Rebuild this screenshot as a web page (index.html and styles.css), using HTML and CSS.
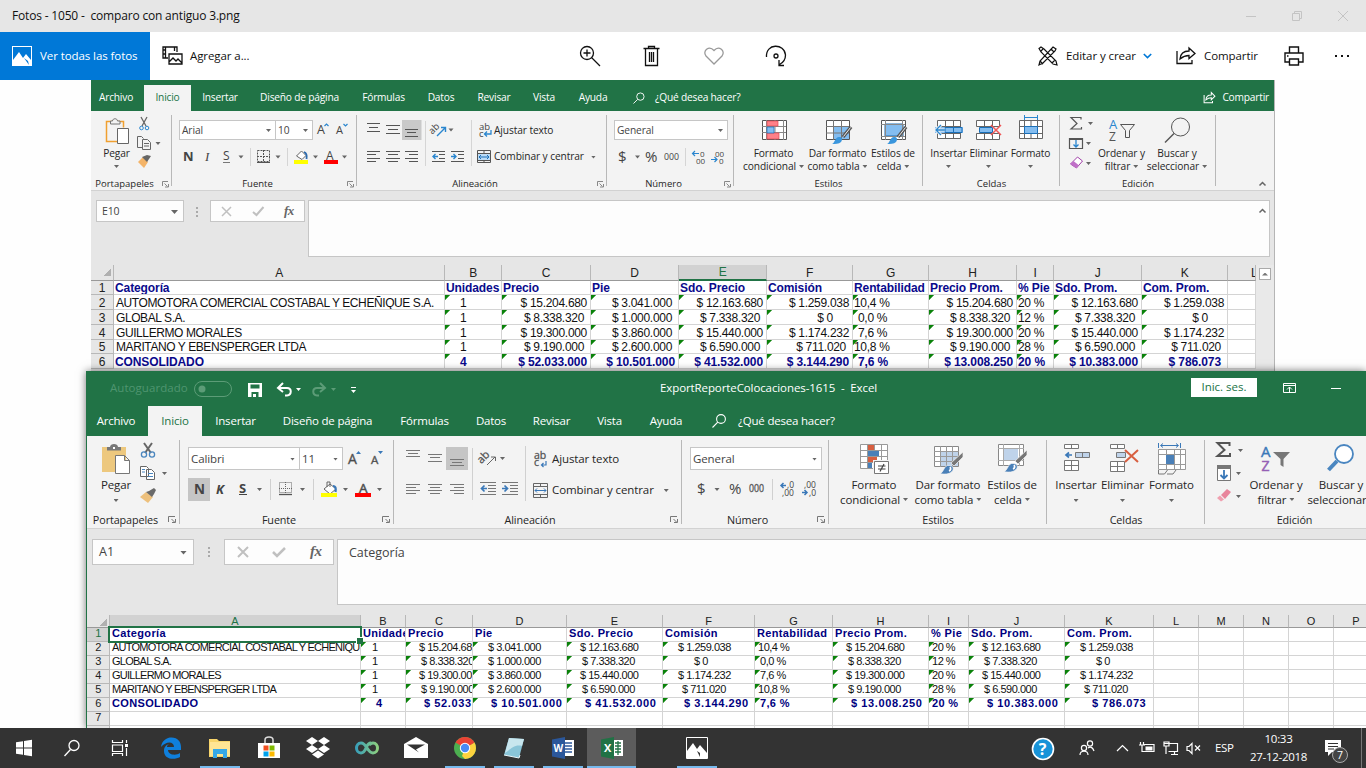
FILE: index.html
```html
<!DOCTYPE html>
<html lang="es">
<head>
<meta charset="utf-8">
<title>Fotos</title>
<link rel="stylesheet" href="styles.css">
</head>
<body>
<header class="titlebar">
  <span class="titlebar-text">Fotos - 1050 -&nbsp; comparo con antiguo 3.png</span>
  <svg class="win-controls" width="138" height="32" viewBox="1228 0 138 32" fill="none" stroke="#c4c4c4"><path d="M1246 16.500h10M1292.500 13.500h7v7h-7zM1294.500 13.500v-2h7v7h-2M1338 11l10 10M1348 11l-10 10"/></svg>
</header>
<nav class="photobar">
  <a class="all-photos">
    <svg width="20" height="20" viewBox="0 0 20 20"><path d="M0 0h20v20H0z" fill="#fff"/><path d="M1 1h18v13l-5-6-3 4-4-6-6 8z" fill="#0078d7"/><path d="M12 12l5 7-1-4z" fill="#0078d7"/></svg>
    <span>Ver todas las fotos</span>
  </a>
  <a class="add-to">
    <svg width="22" height="20" viewBox="0 0 22 20" fill="none" stroke="#111" stroke-width="1.300"><path d="M6 12H1V1h14v5M3.500 1v11M12.500 1v4M1 4h2M1 8h2M7 8h13v10H7zM7 16l4-4 3 3 2-2 4 4"/></svg>
    <span>Agregar a...</span>
  </a>
  <svg class="photo-tools" width="226" height="48" viewBox="570 32 226 48" fill="none" stroke="#111" stroke-width="1.300">
    <circle cx="587" cy="53" r="6.500"/><path d="M591.500 57.500l8.500 8.500M583.500 53h7M587 49.500v7"/>
    <path d="M643.500 48.500h16M648.500 48v-1.500h6V48M645.500 49v16.500h12V49M649.500 52v10M651.500 52v10M653.500 52v10"/>
    <path stroke="#999" d="M714 64l-8-8c-4-5 3-11 8-5.500 5-5.500 12 .5 8 5.500z"/>
    <path d="M766.500 57c-1-14 18-14 19-2 0 5-3 8-6 9.500M779 60v5.500h5"/><circle cx="776" cy="56" r="2"/>
  </svg>
  <div class="photo-actions">
    <svg width="20" height="20" viewBox="0 0 20 20" fill="none" stroke="#111" stroke-width="1.200"><path d="M1 2.500L3 1l3 2 12 12 1 4-4-1L3 6zM3 5l2-2M14 17l3-3M15 1l3 2-1 2L5 17l-4 2 1-4zM13 3l3 3M2 15l3 3"/></svg>
    <span class="act-edit">Editar y crear</span>
    <svg class="chev" width="9" height="6" viewBox="0 0 9 6" fill="none" stroke="#0078d7" stroke-width="1.600"><path d="M.8 1l3.700 3.600L8.200 1"/></svg>
    <svg width="20" height="20" viewBox="0 0 20 20" fill="none" stroke="#111" stroke-width="1.300"><path d="M1 5v12.500h15V14M4 13c.5-6 5-8 9-8V2l6 5.500-6 5V9.500c-4 0-6 1-9 3.500z"/></svg>
    <span class="act-share">Compartir</span>
    <svg class="print" width="20" height="20" viewBox="0 0 20 20" fill="none" stroke="#111" stroke-width="1.400"><path d="M5.500 7V1h9v6M5 16H1V7h18v9h-4M5.500 13h9v6h-9zM3 10h1.500"/></svg>
    <svg class="dots" width="16" height="4" viewBox="0 0 16 4" fill="#111"><path d="M1 1h2v2H1zM7 1h2v2H7zM13 1h2v2h-2z"/></svg>
  </div>
</nav>

<main class="stage">
<section class="photo">
  <div class="tabs old-tabs">
    <span>Archivo</span><span class="on">Inicio</span><span>Insertar</span><span>Diseño de página</span><span>Fórmulas</span><span>Datos</span><span>Revisar</span><span>Vista</span><span>Ayuda</span>
    <svg width="12" height="12" viewBox="0 0 13 13" fill="none" stroke="#fff"><circle cx="8" cy="5" r="4"/><path d="M5 8l-4.500 4.500"/></svg>
    <span class="ask">¿Qué desea hacer?</span>
    <span class="share"><svg width="13" height="12" viewBox="0 0 20 20" fill="none" stroke="#fff" stroke-width="1.700"><path d="M1 5v13h14v-3M4 13c.5-6 5-8 9-8V1l6 6-6 6V9.500c-4 0-6 1-9 3.500z"/></svg>Compartir</span>
  </div>
  <div class="ribbon old-ribbon">
    <div class="group g1">
      <div class="gbody">
        <div class="big"><svg width="24" height="36" viewBox="106 111 24 36" fill="none"><path d="M119 141.500h-11.500V121.500h17v6" stroke="#f0a030" stroke-width="1.500"/><path d="M111.500 124v-3h2c0-3 5-3 5 0h2.500v3z" fill="#f3f3f3" stroke="#777"/><path d="M118.500 128.500h11v15h-11z" fill="#fff" stroke="#666"/></svg><b>Pegar</b><i class="caret"></i></div>
        <svg width="34" height="66" viewBox="137 111 34 66" fill="none"><path d="M141 117l5 9M147 117l-5 9" stroke="#666" stroke-width="1.300"/><circle cx="141.500" cy="128" r="1.800" stroke="#2a86cf"/><circle cx="147" cy="128" r="1.800" stroke="#2a86cf"/><path d="M142 147.500h-4.500v-11h4l2 2M142.500 139.500h5l3 3v7h-8zM144 143.500h5M144 146h5" stroke="#666"/><path d="M155.500 142h5l-2.500 3z" fill="#666"/><path d="M138 162l5-5 5 5-4 6z" fill="#f4b468"/><path d="M142 157l5 5 4-6-4-1z" fill="#666"/></svg>
      </div>
      <div class="gfoot"><span>Portapapeles</span><svg width="14" height="8" viewBox="0 0 14 8" fill="none" stroke="#888"><path d="M4.500 6V1.500H10M6.500 3.500l3 3M10.500 4v3H7"/></svg></div>
    </div>
    <div class="group g2">
      <div class="gbody col">
        <div class="line"><span class="select s-font">Arial<i class="caret"></i></span><span class="select s-size">10<i class="caret"></i></span><svg width="40" height="20" viewBox="313 120 40 20"><text x="317" y="134" class="glyph" font-size="12.500">A</text><text x="336" y="134" class="glyph" font-size="11">A</text><path d="M324.500 126l2-2 2 2M343.500 124l2 2 2-2" fill="none" stroke="#2a86cf" stroke-width="1.200"/></svg></div>
        <svg width="178" height="28" viewBox="179 143 178 28"><text x="183" y="161" class="glyph" font-size="13" font-weight="700">N</text><text x="205" y="161" class="glyph serif" font-size="13" font-style="italic">I</text><text x="223" y="160" class="glyph" font-size="12">S</text><path d="M223 162.500h7" stroke="#777"/><path d="M250.500 148v18M287.500 148v18" stroke="#d5d5d5"/><path d="M257.500 150.500h12v11h-12zM263.500 150v12M257 156.500h13" fill="none" stroke="#555" stroke-dasharray="2 1"/><path d="M257 162.500h13" stroke="#555"/><path d="M296.500 156l5-5 4.500 4.500-4 4z" fill="#fff" stroke="#666"/><path d="M304 152c3 1 3 4 2.500 7" stroke="#2a6aaf" stroke-width="1.800" fill="none"/><path d="M294 160h14v4h-14z" fill="#ff0"/><text x="326" y="160" class="glyph" font-size="12">A</text><path d="M324 160h14v4h-14z" fill="red"/><path d="M238.500 155.500h5l-2.500 3zM275.500 155.500h5l-2.500 3zM313 155.500h5l-2.500 3zM342 155.500h5l-2.500 3z" fill="#666"/></svg>
      </div>
      <div class="gfoot"><span>Fuente</span><svg width="14" height="8" viewBox="0 0 14 8" fill="none" stroke="#888"><path d="M4.500 6V1.500H10M6.500 3.500l3 3M10.500 4v3H7"/></svg></div>
    </div>
    <div class="group g3">
      <div class="gbody">
        <svg width="117" height="66" viewBox="357 111 117 66" fill="none" stroke="#555"><path d="M402 120h19.500v20H402z" fill="#c9c9c9" stroke="none"/><path d="M367 123.500h13M369 127.500h9M367 131.500h13M386 125.500h14M388 129.500h10M386 133.500h14M405 129.500h13M407 132.500h9M405 136.500h13M367 151.500h13M367 154.500h9M367 158.500h13M367 161.500h9M386 151.500h14M388 154.500h10M386 158.500h14M388 161.500h10M405 151.500h13M409 154.500h9M405 158.500h13M409 161.500h9M432 151.500h13M439 154.500h6M439 158.500h6M432 161.500h13M451 151.500h13M458 154.500h6M458 158.500h6M451 161.500h13"/><path d="M425.500 121v45M471.500 120v46" stroke="#d5d5d5"/><path d="M438 156.500h-5M435.500 154l-2.500 2.500 2.500 2.500M451 156.500h5M453.500 154l2.500 2.500-2.500 2.500M437 136l8-8M441 127.500h4.500v4.500" stroke="#2a86cf" stroke-width="1.400"/><text x="431" y="132" class="glyph" font-size="9.500" transform="rotate(-45 435 132)" stroke="none">ab</text><path d="M448.500 128.500h5l-2.500 3z" fill="#666" stroke="none"/></svg>
        <div class="wraps"><div><svg width="20" height="18" viewBox="0 0 20 18"><text x="5" y="8" class="glyph" font-size="9.500">ab</text><text x="5" y="15" class="glyph" font-size="9.500">c</text><path d="M17 8v4h-6M13 9.500L10.500 12l2.500 2.500" fill="none" stroke="#2a86cf" stroke-width="1.300"/></svg>Ajustar texto</div>
        <div><svg width="20" height="16" viewBox="0 0 20 16" fill="none"><path d="M3.500 1.500h13v12h-13zM3 4.500h13M3 11.500h13M10 2v2M10 12v2" stroke="#555"/><path d="M4 5h12v6H4z" fill="#bcdcf7"/><path d="M5 8h10M7 6L5 8l2 2M13 6l2 2-2 2" stroke="#1a6fb8"/></svg>Combinar y centrar<i class="caret"></i></div></div>
      </div>
      <div class="gfoot"><span>Alineación</span><svg width="14" height="8" viewBox="0 0 14 8" fill="none" stroke="#888"><path d="M4.500 6V1.500H10M6.500 3.500l3 3M10.500 4v3H7"/></svg></div>
    </div>
    <div class="group g4">
      <div class="gbody col">
        <span class="select">General<i class="caret"></i></span>
        <svg width="119" height="28" viewBox="614 143 119 28"><text x="618" y="162" class="glyph" font-size="15">$</text><text x="645" y="162" class="glyph" font-size="15">%</text><text x="664" y="160" class="glyph" font-size="9.500" textLength="15" lengthAdjust="spacingAndGlyphs">000</text><text x="700" y="157" class="glyph" font-size="8">0</text><text x="696" y="164" class="glyph" font-size="8">00</text><text x="715" y="157" class="glyph" font-size="8">00</text><text x="719" y="164" class="glyph" font-size="8">0</text><path d="M699 153.500h-6M695 151l-2.500 2.500 2.500 2.500M711 159.500h6M714.500 157l2.500 2.500-2.500 2.500" fill="none" stroke="#2a86cf" stroke-width="1.200"/><path d="M635 155.500h5l-2.500 3z" fill="#666"/><path d="M685.500 148v18" stroke="#d5d5d5"/></svg>
      </div>
      <div class="gfoot"><span>Número</span><svg width="14" height="8" viewBox="0 0 14 8" fill="none" stroke="#888"><path d="M4.500 6V1.500H10M6.500 3.500l3 3M10.500 4v3H7"/></svg></div>
    </div>
    <div class="group g5">
      <div class="gbody">
        <div class="big w1"><svg width="26" height="36" viewBox="760 111 26 36" fill="none"><path d="M761.500 120.500h24v19h-24z" fill="#fff" stroke="#555"/><path d="M765.500 120v20M782.500 120v20M761 126.500h24M761 132.500h24M774 120v20" stroke="#888"/><path d="M766 121h11v5h-11zM766 133h12v6h-12z" fill="#ff8088" stroke="#e04850" stroke-width=".7"/><path d="M766 127h7v6h-7z" fill="#84bdf0" stroke="#1a6fb8" stroke-width=".7"/></svg><b>Formato</b><b>condicional<i class="caret"></i></b></div>
        <div class="big w2"><svg width="26" height="36" viewBox="824 111 26 36" fill="none"><path d="M825.500 120.500h23v19h-23z" fill="#fff" stroke="#555"/><path d="M833 126h15v13h-15z" fill="#84bdf0"/><path d="M825 126.500h23M825 133h23M832.500 120v20M840.500 120v20" stroke="#777"/><path d="M850 127l-8 10" stroke="#555" stroke-width="3.500"/><path d="M849.500 127.500l-7 9" stroke="#eee"/><path d="M831 144c3-1 3-7 7-7 3 0 4 2 2 5-2 2-6 2-9 2z" fill="#3a96dd"/></svg><b>Dar formato</b><b>como tabla<i class="caret"></i></b></div>
        <div class="big w3"><svg width="26" height="36" viewBox="879 111 26 36" fill="none"><path d="M880.500 120.500h24v19h-24z" fill="#fff" stroke="#555"/><path d="M884 124h18v12h-18z" fill="#84bdf0" stroke="#1a6fb8"/><path d="M884.500 120v20M880 124.500h24M880 136.500h24M901.500 120v20" stroke="#888"/><path d="M905 127l-8 10" stroke="#555" stroke-width="3.500"/><path d="M904.500 127.500l-7 9" stroke="#eee"/><path d="M886 144c3-1 3-7 7-7 3 0 4 2 2 5-2 2-6 2-9 2z" fill="#3a96dd"/></svg><b>Estilos de</b><b>celda<i class="caret"></i></b></div>
      </div>
      <div class="gfoot"><span>Estilos</span></div>
    </div>
    <div class="group g6">
      <div class="gbody">
        <div class="big w1"><svg width="28" height="36" viewBox="935 111 28 36" fill="none"><path d="M937.500 120.500h23v18h-23zM945.500 120v19M953.500 120v19M937 126.500h24M937 133.500h24" fill="#fff" stroke="#666"/><path d="M935 127h28v6h-28z" fill="#84bdf0"/><path d="M945 127.500h17v5h-17zM953.500 127v6" stroke="#1a6fb8"/><path d="M945 130h-9M941 125l-5 5 5 5" stroke="#f3f3f3" stroke-width="3"/><path d="M945 130h-9M941 125l-5 5 5 5" stroke="#2a86cf" stroke-width="1.300"/></svg><b>Insertar</b><i class="caret"></i></div>
        <div class="big w2"><svg width="28" height="36" viewBox="976 111 28 36" fill="none"><path d="M977.500 120.500h23v6h-23zM977.500 133.500h23v6h-23zM985.500 120v6M993.500 120v6M985.500 133v6M993.500 133v6" fill="#fff" stroke="#666"/><path d="M980.500 127.500h13v5h-13z" fill="#84bdf0" stroke="#1a6fb8"/><path d="M992 125l10 10M1002 125l-10 10" stroke="#f05858" stroke-width="1.500"/></svg><b>Eliminar</b><i class="caret"></i></div>
        <div class="big w3"><svg width="26" height="36" viewBox="1018 111 26 36" fill="none"><path d="M1019.500 120.500h23v18h-23zM1024.500 120v19M1037.500 120v19M1019 126.500h24M1019 133.500h24M1031 120v19" fill="#fff" stroke="#666"/><path d="M1024.500 126.500h13v7h-13z" fill="#84bdf0" stroke="#1a6fb8"/><path d="M1024 117.500h14M1024.500 115v5M1037.500 115v5" stroke="#2a86cf"/></svg><b>Formato</b><i class="caret"></i></div>
      </div>
      <div class="gfoot"><span>Celdas</span></div>
    </div>
    <div class="group g7">
      <div class="gbody">
        <svg width="37" height="66" viewBox="1060 111 37 66" fill="none"><path d="M1081 119.500v-2h-10l6 6-6 5.500h10.500v-2M1069.500 138.500h13v10h-13zM1069 139.500h14" stroke="#555" stroke-width="1.200"/><path d="M1076 140v7M1073.500 144.500l2.500 2.500 2.500-2.500" stroke="#2a86cf" stroke-width="1.300"/><path d="M1070.500 164l7-7 5 4-6 7z" fill="#fff" stroke="#a040a8"/><path d="M1070.500 164l3-3 5 4-2.500 3z" fill="#c070c8"/><path d="M1088 122h5l-2.500 3zM1086 142h5l-2.500 3zM1086 162h5l-2.500 3z" fill="#666"/></svg>
        <div class="big w1"><svg width="28" height="36" viewBox="1107 111 28 36" fill="none"><text x="1108" y="129" font-size="13" fill="#2a86cf" class="ui">A</text><text x="1108" y="141" font-size="12" fill="#555" class="ui">Z</text><path d="M1119.500 124.500h14l-5 6v7h-4v-7z" stroke="#555"/></svg><b>Ordenar y</b><b>filtrar<i class="caret"></i></b></div>
        <div class="big w2"><svg width="28" height="36" viewBox="1163 111 28 36" fill="none" stroke="#555"><circle cx="1180.500" cy="127" r="9"/><path d="M1174 133.500l-9 9" stroke-width="1.400"/></svg><b>Buscar y</b><b>seleccionar<i class="caret"></i></b></div>
      </div>
      <div class="gfoot"><span>Edición</span></div>
    </div>
    <svg class="collapse" width="9" height="6" viewBox="0 0 9 6" fill="none" stroke="#666" stroke-width="1.500"><path d="M1.500 4.500l3-3 3 3"/></svg>
  </div>
  <div class="fbar old-fbar">
    <span class="namebox">E10<i class="caret"></i></span>
    <svg width="26" height="22" viewBox="184 200 26 22" fill="#aaa"><path d="M196 207h2v2h-2zM196 211h2v2h-2zM196 215h2v2h-2z"/></svg>
    <span class="fx"><svg width="93" height="20" viewBox="211 201 93 20" fill="none" stroke="#c0c0c0" stroke-width="1.500"><path d="M222 207l9 9M231 207l-9 9"/><path d="M253 212l3.500 3 7-8" stroke-width="2"/><text x="284" y="215" class="glyph fxg" font-size="13" stroke="none">fx</text></svg></span>
    <span class="finput"><svg width="9" height="6" viewBox="0 0 9 6" fill="none" stroke="#666" stroke-width="1.500"><path d="M1.500 4.500l3-3 3 3"/></svg></span>
  </div>
  <div class="sheet">
  <table class="old-table">
    <colgroup><col class="c0"><col class="c1"><col class="c2"><col class="c3"><col class="c4"><col class="c5"><col class="c6"><col class="c7"><col class="c8"><col class="c9"><col class="c10"><col class="c11"><col class="c12"></colgroup>
    <tr class="head"><th class="corner"></th><th>A</th><th>B</th><th>C</th><th>D</th><th class="sel">E</th><th>F</th><th>G</th><th>H</th><th>I</th><th>J</th><th>K</th><th class="cut">L</th></tr>
    <tr class="bold"><th>1</th><td>Categoría</td><td>Unidades</td><td>Precio</td><td>Pie</td><td>Sdo. Precio</td><td>Comisión</td><td>Rentabilidad</td><td>Precio Prom.</td><td>% Pie</td><td>Sdo. Prom.</td><td>Com. Prom.</td><td></td></tr>
    <tr><th>2</th><td class="name">AUTOMOTORA COMERCIAL COSTABAL Y ECHEÑIQUE S.A.</td><td class="t u">1</td><td class="t n">$ 15.204.680</td><td class="t n m">$ 3.041.000</td><td class="t n">$ 12.163.680</td><td class="t n">$ 1.259.038</td><td class="t">10,4 %</td><td class="t n">$ 15.204.680</td><td class="t">20 %</td><td class="t n">$ 12.163.680</td><td class="t n">$ 1.259.038</td><td></td></tr>
    <tr><th>3</th><td class="name">GLOBAL S.A.</td><td class="t u">1</td><td class="t n m">$ 8.338.320</td><td class="t n m">$ 1.000.000</td><td class="t n m">$ 7.338.320</td><td class="t n z">$ 0</td><td class="t p">0,0 %</td><td class="t n m">$ 8.338.320</td><td class="t">12 %</td><td class="t n m">$ 7.338.320</td><td class="t n z">$ 0</td><td></td></tr>
    <tr><th>4</th><td class="name">GUILLERMO MORALES</td><td class="t u">1</td><td class="t n">$ 19.300.000</td><td class="t n m">$ 3.860.000</td><td class="t n">$ 15.440.000</td><td class="t n">$ 1.174.232</td><td class="t p">7,6 %</td><td class="t n">$ 19.300.000</td><td class="t">20 %</td><td class="t n">$ 15.440.000</td><td class="t n">$ 1.174.232</td><td></td></tr>
    <tr><th>5</th><td class="name">MARITANO Y EBENSPERGER LTDA</td><td class="t u">1</td><td class="t n m">$ 9.190.000</td><td class="t n m">$ 2.600.000</td><td class="t n m">$ 6.590.000</td><td class="t n m">$ 711.020</td><td class="t">10,8 %</td><td class="t n m">$ 9.190.000</td><td class="t">28 %</td><td class="t n m">$ 6.590.000</td><td class="t n m">$ 711.020</td><td></td></tr>
    <tr class="bold"><th>6</th><td>CONSOLIDADO</td><td class="t u">4</td><td class="t n">$ 52.033.000</td><td class="t n">$ 10.501.000</td><td class="t n">$ 41.532.000</td><td class="t n">$ 3.144.290</td><td class="t p">7,6 %</td><td class="t n">$ 13.008.250</td><td class="t">20 %</td><td class="t n">$ 10.383.000</td><td class="t n m">$ 786.073</td><td></td></tr>
  </table>
  <div class="vscroll"><span><i></i></span></div>
  </div>
</section>

<section class="excel">
  <div class="xtitle">
    <span class="autosave">Autoguardado</span>
    <svg width="170" height="34" viewBox="190 371 170 34" fill="none"><rect x="194.500" y="380.500" width="37" height="15" rx="7.500" stroke="#5c9c77"/><circle cx="202" cy="388" r="3.500" fill="#5c9c77"/><path d="M248 382h14v14h-14z" fill="#fff"/><path d="M250.500 383.500h9v4h-9zM251.500 391h7v5h-7z" fill="#217346"/><path d="M253 393h3v3h-3z" fill="#fff"/><path d="M283 382l-5 5 5 4M279 387h8c5 0 5 7 0 7.500h-2" stroke="#fff" stroke-width="2"/><path d="M320 382l5 5-5 4M324 387h-7c-5 0-5 7 0 7.500h2" stroke="#5c9c77" stroke-width="2"/><path d="M296 387h5l-2.500 3zM351 389h5l-2.500 3z" fill="#fff"/><path d="M331 387h5l-2.500 3z" fill="#5c9c77"/><path d="M351 386.500h5" stroke="#fff"/></svg>
    <span class="xname">ExportReporteColocaciones-1615 &nbsp;-&nbsp; Excel</span>
    <span class="signin">Inic. ses.</span>
    <svg width="100" height="34" viewBox="1266 371 100 34" fill="none" stroke="#fff"><path d="M1283.500 382.500h12v9h-12zM1283 384.500h13M1289.500 391v-5M1287 388.500l2.500-2.500 2.500 2.500M1331 387.500h10"/></svg>
  </div>
  <div class="tabs new-tabs">
    <span>Archivo</span><span class="on">Inicio</span><span>Insertar</span><span>Diseño de página</span><span>Fórmulas</span><span>Datos</span><span>Revisar</span><span>Vista</span><span>Ayuda</span>
    <svg width="14" height="14" viewBox="0 0 14 14" fill="none" stroke="#fff" stroke-width="1.100"><circle cx="9" cy="5" r="4.400"/><path d="M5.800 8.200L.5 13.500"/></svg>
    <span class="ask">¿Qué desea hacer?</span>
  </div>
  <div class="ribbon new-ribbon">
    <div class="group g1">
      <div class="gbody">
        <div class="big"><svg width="30" height="40" viewBox="103 436 30 40" fill="none"><path d="M104 447h24v25h-24z" fill="#edc87e"/><path d="M109 450.500v-3.500h3c0-4 8-4 8 0h3v3.500z" fill="#777"/><path d="M115 447h2v2h-2z" fill="#fff"/><path d="M117.500 455.500h9l5 5v13h-14zM126.500 455.500v5h5" fill="#fff" stroke="#777"/></svg><b>Pegar</b><i class="caret"></i></div>
        <svg width="40" height="75" viewBox="139 436 40 75" fill="none"><path d="M144 443l7 10M152 443l-7 10" stroke="#666" stroke-width="2"/><circle cx="144" cy="454.500" r="2.600" stroke="#4a86bf" stroke-width="1.300"/><circle cx="152" cy="454.500" r="2.600" stroke="#4a86bf" stroke-width="1.300"/><path d="M140.500 466.500h6l2 2v8h-8zM146.500 469.500h5l3 3v7h-8z" fill="#fff" stroke="#666"/><path d="M142 469.500h3M142 472h3M148 473.500h5M148 476.500h5" stroke="#4a86bf"/><path d="M162 472h5l-2.500 3z" fill="#666"/><path d="M140 497l6-5 7 5-5 6z" fill="#edc07c"/><path d="M146 492l6 5 2-3 2-4-2-2-5 3z" fill="#6a6a6a"/></svg>
      </div>
      <div class="gfoot"><span>Portapapeles</span><svg width="16" height="9" viewBox="0 0 16 9" fill="none" stroke="#777"><path d="M4.500 7V1.500H11M7.500 4l3 3M11.500 4v3.500H8"/></svg></div>
    </div>
    <div class="group g2">
      <div class="gbody col">
        <div class="line"><span class="select s-font">Calibri<i class="caret"></i></span><span class="select s-size">11<i class="caret"></i></span><svg width="48" height="23" viewBox="343 447 48 23"><text x="348" y="464" class="glyph" font-size="14" stroke="#666" stroke-width=".4">A</text><text x="371" y="464" class="glyph" font-size="11.500" stroke="#666" stroke-width=".4">A</text><path d="M356 454l2.500-3 2.500 3zM378 451l2.500 3 2.500-3z" fill="#3a78b8"/></svg></div>
        <svg width="205" height="34" viewBox="188 473 205 34"><path d="M188 478h22v23h-22z" fill="#c5c5c5"/><text x="194" y="494" class="glyph" font-size="13.500" font-weight="700">N</text><text x="216" y="494" class="glyph" font-size="13" font-weight="700" font-style="italic">K</text><text x="239" y="493" class="glyph" font-size="13" font-weight="700">S</text><path d="M239 494.500h8" stroke="#444"/><path d="M270.500 479v21M313.500 479v21" stroke="#d0d0d0"/><path d="M279.500 482.500h12v10h-12zM285.500 482v11M279 488.500h13" fill="none" stroke="#666" stroke-dasharray="1 1"/><path d="M279 494.500h13" stroke="#555" stroke-width="1.300"/><path d="M324 489l6-5 6 5-6 5z" fill="#fff" stroke="#666"/><path d="M327 487v-5h3v5" fill="none" stroke="#666"/><path d="M333 486c3 0 3 3 2.500 6" stroke="#3a78b8" stroke-width="2.200" fill="none"/><path d="M321 493h16v4h-16z" fill="#ff0"/><text x="359" y="493" class="glyph" font-size="13.500" stroke="#555" stroke-width=".5">A</text><path d="M355 493h16v4h-16z" fill="red"/><path d="M257 488h5l-2.500 3zM300 488h5l-2.500 3zM343 488h5l-2.500 3zM377 488h5l-2.500 3z" fill="#666"/></svg>
      </div>
      <div class="gfoot"><span>Fuente</span><svg width="16" height="9" viewBox="0 0 16 9" fill="none" stroke="#777"><path d="M4.500 7V1.500H11M7.500 4l3 3M11.500 4v3.500H8"/></svg></div>
    </div>
    <div class="group g3">
      <div class="gbody">
        <svg width="134" height="75" viewBox="394 436 134 75" fill="none" stroke="#777"><path d="M446 447h22v23h-22z" fill="#c5c5c5" stroke="none"/><path d="M406 450.500h14M408 453.500h10M406 456.500h14M428 454.500h14M430 457.500h10M428 461.500h14M450 459.500h14M452 462.500h10M450 465.500h14M406 484.500h14M406 487.500h10M406 490.500h14M406 493.500h10M428 484.500h14M430 487.500h10M428 490.500h14M430 493.500h10M450 484.500h14M454 487.500h10M450 490.500h14M454 493.500h10M480 482.500h16M488 485.500h8M488 488.500h8M488 491.500h8M480 494.500h16M502 482.500h16M510 485.500h8M510 488.500h8M510 491.500h8M502 494.500h16"/><path d="M472.500 448v52M525.500 446v55" stroke="#d0d0d0"/><path d="M487 488.500h-5M484.500 485.500l-3 3 3 3M502 488.500h5M504.500 485.500l3 3-3 3" stroke="#3a78b8" stroke-width="1.700"/><path d="M487 465l8-8M491 457h4.500v4" stroke="#666"/><text x="479" y="461" class="glyph" font-size="11" transform="rotate(-45 484 460)" stroke="#666" stroke-width=".3">ab</text><path d="M500 457h5l-2.500 3z" fill="#666" stroke="none"/></svg>
        <div class="wraps"><div><svg width="24" height="20" viewBox="0 0 24 20"><text x="6" y="9" class="glyph" font-size="10.500" stroke="#666" stroke-width=".3">ab</text><text x="6" y="16" class="glyph" font-size="10.500" stroke="#666" stroke-width=".3">c</text><path d="M18 11v4h-4M15.500 13L13.500 15l2 2" fill="none" stroke="#3a78b8" stroke-width="1.200"/></svg>Ajustar texto</div>
        <div><svg width="24" height="17" viewBox="0 0 24 17" fill="none"><path d="M5.500 1.500h14v14h-14zM5 4.500h14M5 12.500h14M12.500 2v2M12.500 13v2" stroke="#666"/><path d="M7 8.500h11M9 6.500l-2 2 2 2M16 6.500l2 2-2 2" stroke="#3a78b8"/></svg>Combinar y centrar<i class="caret"></i></div></div>
      </div>
      <div class="gfoot"><span>Alineación</span><svg width="16" height="9" viewBox="0 0 16 9" fill="none" stroke="#777"><path d="M4.500 7V1.500H11M7.500 4l3 3M11.500 4v3.500H8"/></svg></div>
    </div>
    <div class="group g4">
      <div class="gbody col">
        <span class="select">General<i class="caret"></i></span>
        <svg width="138" height="34" viewBox="690 473 138 34"><text x="697" y="494" class="glyph" font-size="15">$</text><text x="729" y="494" class="glyph" font-size="15">%</text><text x="749" y="492" class="glyph" font-size="10" stroke="#666" stroke-width=".3" textLength="15" lengthAdjust="spacingAndGlyphs">000</text><text x="787" y="488" class="glyph" font-size="8.500">,0</text><text x="782" y="496" class="glyph" font-size="8.500">,00</text><text x="804" y="488" class="glyph" font-size="8.500">,00</text><text x="809" y="496" class="glyph" font-size="8.500">,0</text><path d="M786 485.500h-5M783.500 483l-2.500 2.500 2.500 2.500M802 492.500h5M804.500 490l2.500 2.500-2.500 2.500" fill="none" stroke="#3a78b8" stroke-width="1.500"/><path d="M714.500 488h5l-2.500 3z" fill="#666"/><path d="M772.500 479v21" stroke="#d0d0d0"/></svg>
      </div>
      <div class="gfoot"><span>Número</span><svg width="16" height="9" viewBox="0 0 16 9" fill="none" stroke="#777"><path d="M4.500 7V1.500H11M7.500 4l3 3M11.500 4v3.500H8"/></svg></div>
    </div>
    <div class="group g5">
      <div class="gbody">
        <div class="big w1"><svg width="32" height="40" viewBox="858 436 32 40" fill="none"><path d="M860.500 444.500h27v24h-27zM867.500 444v25M881.500 444v25M860 450.500h27M860 456.500h27M860 462.500h27M874.500 444v25" fill="#fff" stroke="#999"/><path d="M868 445h6v5h-6zM868 457h9v5h-9z" fill="#d85f40"/><path d="M868 451h11v5h-11zM868 463h4v5h-4z" fill="#4a80b8"/><path d="M873 460h17v15h-17z" fill="#f3f3f3"/><path d="M874.500 461.500h14v12h-14z" fill="#fff" stroke="#777"/><path d="M878 466h7.500M878 469h7.500M884 464l-4 7.500" stroke="#444" stroke-width="1.200"/></svg><b>Formato</b><b>condicional<i class="caret"></i></b></div>
        <div class="big w2"><svg width="32" height="40" viewBox="933 436 32 40" fill="none"><path d="M935.500 446.500h24v20h-24z" fill="#fff" stroke="#888"/><path d="M942 452h17v14h-17z" fill="#bfd3ea"/><path d="M935 451.500h25M935 456.500h25M935 461.500h25M941.500 446v21M947.500 446v21M953.500 446v21" stroke="#999"/><path d="M964 452v5l-9 9-3-3z" fill="#777" stroke="#f3f3f3" stroke-width=".7"/><path d="M941 473.500c4-1 4-9 9-8 5 0 5 4 3 6-3 3-8 3-12 2z" fill="#4a80b8" stroke="#f3f3f3" stroke-width=".7"/><path d="M950 471a2.500 2.500 0 0 0 1-4" stroke="#fff" stroke-width="1.800"/></svg><b>Dar formato</b><b>como tabla<i class="caret"></i></b></div>
        <div class="big w3"><svg width="32" height="40" viewBox="997 436 32 40" fill="none"><path d="M999.500 444.500h25v21h-25z" fill="#fff" stroke="#888"/><path d="M1004.500 444v22M1020.500 444v22M999 448.500h26M999 460.500h26" stroke="#aaa"/><path d="M1005 449h14v11h-14z" fill="#bfd3ea"/><path d="M1028 450v5l-9 9-3-3z" fill="#777" stroke="#f3f3f3" stroke-width=".7"/><path d="M1005 471.500c4-1 4-9 9-8 5 0 5 4 3 6-3 3-8 3-12 2z" fill="#4a80b8" stroke="#f3f3f3" stroke-width=".7"/><path d="M1014 469a2.500 2.500 0 0 0 1-4" stroke="#fff" stroke-width="1.800"/></svg><b>Estilos de</b><b>celda<i class="caret"></i></b></div>
      </div>
      <div class="gfoot"><span>Estilos</span></div>
    </div>
    <div class="group g6">
      <div class="gbody">
        <div class="big w1"><svg width="28" height="40" viewBox="1062 436 28 40" fill="none"><path d="M1064.500 444.500h14v4h-14zM1071.500 444v5M1064.500 460.500h14v10h-14zM1071.500 460v11M1064 465.500h15" fill="#fff" stroke="#777"/><path d="M1075.500 452.500h14v5h-14zM1082.500 452v6" fill="#bfd3ea" stroke="#777"/><path d="M1072 455h-6M1069 452.500l-3 2.500 3 2.500" stroke="#3a78b8" stroke-width="1.700"/></svg><b>Insertar</b><i class="caret"></i></div>
        <div class="big w2"><svg width="30" height="40" viewBox="1107 436 30 40" fill="none"><path d="M1109.500 444.500h14v4h-14zM1116.500 444v5M1109.500 461.500h14v10h-14zM1116.500 461v11M1109 466.500h15" fill="#fff" stroke="#777"/><path d="M1115.500 452.500h9v5h-9z" fill="#bfd3ea" stroke="#777"/><path d="M1124 450l13 12M1137 450l-13 12" stroke="#d85f40" stroke-width="2"/></svg><b>Eliminar</b><i class="caret"></i></div>
        <div class="big w3"><svg width="30" height="40" viewBox="1157 436 30 40" fill="none"><path d="M1158.500 449.500h27v20h-27zM1166.500 449v20M1174.500 449v20M1180.500 449v20M1158 454.500h27M1158 464.500h27" fill="#fff" stroke="#999"/><path d="M1158.500 470v4h6l3-4M1167 474h6l3-4" stroke="#777"/><path d="M1166 455h8v9h-8z" fill="#4a80b8"/><path d="M1158.500 443v5M1180.500 443v5M1161 445.500h17M1163 443.500l-2.500 2 2.500 2M1176 443.500l2.500 2-2.500 2" stroke="#3a78b8"/></svg><b>Formato</b><i class="caret"></i></div>
      </div>
      <div class="gfoot"><span>Celdas</span></div>
    </div>
    <div class="group g7">
      <div class="gbody">
        <svg width="44" height="75" viewBox="1205 436 44 75" fill="none"><path d="M1229.500 446v-3h-12l7 7-7 6h12.500v-3" stroke="#555" stroke-width="2"/><path d="M1217.500 466.500h13v14h-13z" fill="#fff" stroke="#777"/><path d="M1217 465h14v4h-14z" fill="#777"/><path d="M1224 470v8M1220.500 475l3.500 3.500 3.500-3.500" stroke="#3a78b8" stroke-width="1.800"/><path d="M1221 495l6-6 4 3-6 7z" fill="#e8859c"/><path d="M1217 498l3-2.500 4 4-3 2z" fill="#f0a0b0"/><path d="M1238 449h5l-2.500 3zM1236 472h5l-2.500 3zM1236 495h5l-2.500 3z" fill="#666"/></svg>
        <div class="big w1"><svg width="30" height="40" viewBox="1261 436 30 40"><text x="1261" y="457" font-size="15" fill="#3a78b8" stroke="#3a78b8" stroke-width=".4" class="ui">A</text><text x="1261.500" y="471" font-size="14" fill="#955fb5" stroke="#955fb5" stroke-width=".5" class="ui">Z</text><path d="M1273 452h17l-6.500 7v8l-3-2v-6z" fill="#777"/></svg><b>Ordenar y</b><b>filtrar<i class="caret"></i></b></div>
        <div class="big w2"><svg width="30" height="40" viewBox="1326 436 30 40" fill="none" stroke="#4a86c0"><circle cx="1344" cy="454" r="9" fill="#fff" stroke-width="1.800"/><path d="M1337 461l-8.500 9" stroke-width="4"/></svg><b>Buscar y</b><b>seleccionar<i class="caret"></i></b></div>
      </div>
      <div class="gfoot"><span>Edición</span></div>
    </div>
  </div>
  <div class="fbar new-fbar">
    <span class="namebox">A1<i class="caret"></i></span>
    <svg width="30" height="26" viewBox="194 539 30 26" fill="#aaa"><path d="M208 547h2v2h-2zM208 551h2v2h-2zM208 555h2v2h-2z"/></svg>
    <span class="fx"><svg width="108" height="24" viewBox="225 540 108 24" fill="none" stroke="#c0c0c0" stroke-width="2"><path d="M238 547l10 10M248 547l-10 10"/><path d="M273 552l4 4 8-8" stroke-width="2.500"/><text x="310" y="556" class="glyph fxg" font-size="15" stroke="none">fx</text></svg></span>
    <span class="finput">Categoría</span>
  </div>
  <div class="sheet">
  <table class="new-table">
    <colgroup><col class="c0"><col class="c1"><col class="c2"><col class="c3"><col class="c4"><col class="c5"><col class="c6"><col class="c7"><col class="c8"><col class="c9"><col class="c10"><col class="c11"><col class="c12"><col class="c12"><col class="c12"><col class="c12"><col class="c12"></colgroup>
    <tr class="head"><th class="corner"></th><th class="sel">A</th><th>B</th><th>C</th><th>D</th><th>E</th><th>F</th><th>G</th><th>H</th><th>I</th><th>J</th><th>K</th><th>L</th><th>M</th><th>N</th><th>O</th><th>P</th></tr>
    <tr class="bold"><th class="sel">1</th><td class="active">Categoría</td><td>Unidades</td><td>Precio</td><td>Pie</td><td>Sdo. Precio</td><td>Comisión</td><td>Rentabilidad</td><td>Precio Prom.</td><td>% Pie</td><td>Sdo. Prom.</td><td>Com. Prom.</td><td></td><td></td><td></td><td></td><td></td></tr>
    <tr><th>2</th><td class="name">AUTOMOTORA COMERCIAL COSTABAL Y ECHEÑIQUE S.A.</td><td class="t u">1</td><td class="t n">$ 15.204.680</td><td class="t n m">$ 3.041.000</td><td class="t n">$ 12.163.680</td><td class="t n m">$ 1.259.038</td><td class="t">10,4 %</td><td class="t n">$ 15.204.680</td><td class="t">20 %</td><td class="t n">$ 12.163.680</td><td class="t n m">$ 1.259.038</td><td></td><td></td><td></td><td></td><td></td></tr>
    <tr><th>3</th><td class="name">GLOBAL S.A.</td><td class="t u">1</td><td class="t n m">$ 8.338.320</td><td class="t n m">$ 1.000.000</td><td class="t n m">$ 7.338.320</td><td class="t n z">$ 0</td><td class="t p">0,0 %</td><td class="t n m">$ 8.338.320</td><td class="t">12 %</td><td class="t n m">$ 7.338.320</td><td class="t n z">$ 0</td><td></td><td></td><td></td><td></td><td></td></tr>
    <tr><th>4</th><td class="name">GUILLERMO MORALES</td><td class="t u">1</td><td class="t n">$ 19.300.000</td><td class="t n m">$ 3.860.000</td><td class="t n">$ 15.440.000</td><td class="t n m">$ 1.174.232</td><td class="t p">7,6 %</td><td class="t n">$ 19.300.000</td><td class="t">20 %</td><td class="t n">$ 15.440.000</td><td class="t n m">$ 1.174.232</td><td></td><td></td><td></td><td></td><td></td></tr>
    <tr><th>5</th><td class="name">MARITANO Y EBENSPERGER LTDA</td><td class="t u">1</td><td class="t n m">$ 9.190.000</td><td class="t n m">$ 2.600.000</td><td class="t n m">$ 6.590.000</td><td class="t n h">$ 711.020</td><td class="t">10,8 %</td><td class="t n m">$ 9.190.000</td><td class="t">28 %</td><td class="t n m">$ 6.590.000</td><td class="t n h">$ 711.020</td><td></td><td></td><td></td><td></td><td></td></tr>
    <tr class="bold"><th>6</th><td>CONSOLIDADO</td><td class="t u">4</td><td class="t n">$ 52.033</td><td class="t n">$ 10.501.000</td><td class="t n">$ 41.532.000</td><td class="t n w">$ 3.144.290</td><td class="t p">7,6 %</td><td class="t n">$ 13.008.250</td><td class="t">20 %</td><td class="t n">$ 10.383.000</td><td class="t n z">$ 786.073</td><td></td><td></td><td></td><td></td><td></td></tr>
    <tr><th>7</th><td></td><td></td><td></td><td></td><td></td><td></td><td></td><td></td><td></td><td></td><td></td><td></td><td></td><td></td><td></td><td></td></tr>
    <tr><th></th><td></td><td></td><td></td><td></td><td></td><td></td><td></td><td></td><td></td><td></td><td></td><td></td><td></td><td></td><td></td><td></td></tr>
  </table>
  </div>
</section>
</main>

<footer class="taskbar">
  <span class="slot sm"><svg width="18" height="18" viewBox="0 0 18 18" fill="#fff"><path d="M1 3.200l7-1v6.300H1zM9 2l8-1.200v7.700H9zM1 9.500h7v6.300l-7-1zM9 9.500h8v7.700L9 16z"/></svg></span>
  <span class="slot sm"><svg width="18" height="18" viewBox="0 0 18 18" fill="none" stroke="#fff" stroke-width="1.300"><circle cx="11" cy="6.500" r="5"/><path d="M7.500 10.500L1.500 17"/></svg></span>
  <span class="slot sm"><svg width="18" height="18" viewBox="0 0 18 18" fill="none" stroke="#fff" stroke-width="1.200"><path d="M1.500 1v2.500h10V1M1.500 6h10v6.500h-10zM1.500 17v-2.500h10V17M15.500 1v3M15.500 9v8"/><path d="M14 5h3v3h-3z" fill="#fff" stroke="none"/></svg></span>
  <span class="gap3"></span>
  <span class="slot"><svg width="22" height="22" viewBox="0 0 22 22"><path d="M1 10C2 3 7 .5 11.500 .5 18 .5 21 5 21 10v3H8c0 5 8 6 12 3v4c-5 3-16 3-16-6 0-4 2-6 5-7-1.500 1-2 2-2 3h7c0-6-8-6-13 0z" fill="#0f7fdc"/></svg></span>
  <span class="slot run"><svg width="24" height="22" viewBox="0 0 24 22"><path d="M1 2h8l2 2h11v16H1z" fill="#f8d56b"/><path d="M2 5h20v14H2z" fill="#ffe594"/><path d="M5 12h14v9h-4v-4H9v4H5z" fill="#35a8e8"/></svg></span>
  <span class="slot"><svg width="24" height="24" viewBox="0 0 24 24"><path d="M1 7h22v15H1z" fill="#fff"/><path d="M8 7V4c0-4 8-4 8 0v3" fill="none" stroke="#ddd" stroke-width="1.500"/><path d="M6.500 9.500h5v5h-5z" fill="#f04e1f"/><path d="M12.500 9.500h5v5h-5z" fill="#7eb900"/><path d="M6.500 15.500h5v5h-5z" fill="#00a2ed"/><path d="M12.500 15.500h5v5h-5z" fill="#fdb900"/></svg></span>
  <span class="slot"><svg width="24" height="24" viewBox="0 0 24 24" fill="#fff"><path d="M6 1l6 4-6 4-6-4zM18 1l6 4-6 4-6-4zM0 13l6-4 6 4-6 4zM18 9l6 4-6 4-6-4zM6 18.500l6-4 6 4-6 4z"/></svg></span>
  <span class="slot"><svg width="26" height="16" viewBox="0 0 26 16" fill="none" stroke-width="3"><defs><linearGradient id="lp"><stop offset="0" stop-color="#3aa0b8"/><stop offset="1" stop-color="#8ccf80"/></linearGradient></defs><path d="M17 3C11 3 13 13 7 13S1 3 7 3s6 10 12 10 6-10 0-10c-2 0-3 1-4 2" stroke="url(#lp)"/></svg></span>
  <span class="slot"><svg width="24" height="22" viewBox="0 0 24 22"><path d="M0 7l12-7 12 7v14H0z" fill="#fff"/><path d="M3 7.500h18l-9 5 3 3-12-8z" fill="#333"/></svg></span>
  <span class="slot run"><svg width="22" height="22" viewBox="0 0 22 22"><circle cx="11" cy="11" r="11" fill="#4caf50"/><path d="M11 11L1.500 5.500A11 11 0 0 1 20.500 5.500z" fill="#ea4335"/><path d="M11 11l9.500-5.500A11 11 0 0 1 11 22z" fill="#fdd23e"/><path d="M11 5.500h9.500L11 11z" fill="#ea4335"/><path d="M11 22l5-8-5-3-3 8z" fill="#fdd23e"/><circle cx="11" cy="11" r="5.200" fill="#fff"/><circle cx="11" cy="11" r="4.200" fill="#4a8af4"/></svg></span>
  <span class="slot run"><svg width="24" height="24" viewBox="0 0 24 24"><path d="M7 2l15 1-5 19-15-3z" fill="#8ac5d8"/><path d="M7 2l15 1-2 7C12 8 8 14 3 17z" fill="#c8e6ee"/><path d="M2 19l15 3 1-3" fill="none" stroke="#e8f4f8"/></svg></span>
  <span class="slot run"><svg width="24" height="22" viewBox="0 0 24 22"><path d="M12 3h11v16H12z" fill="#fff"/><path d="M14 6h7M14 9h7M14 12h7M14 15h7" stroke="#2b579a" stroke-width="1.300"/><path d="M1 2.500L14 0v22L1 19.500z" fill="#2b579a"/><text x="2.500" y="15" font-size="10" font-weight="700" fill="#fff" class="ui">W</text></svg></span>
  <span class="slot run cur"><svg width="24" height="22" viewBox="0 0 24 22"><path d="M12 3h11v16H12z" fill="#fff"/><path d="M15 6h6M15 9h6M15 12h6M15 15h6M18 4v14" stroke="#207245" stroke-width="1.300"/><path d="M1 2.500L14 0v22L1 19.500z" fill="#207245"/><text x="4" y="15" font-size="11" font-weight="700" fill="#fff" class="ui">X</text></svg></span>
  <span class="gap35"></span>
  <span class="slot run"><svg width="22" height="22" viewBox="0 0 22 22"><path d="M.5 .5h21v21H.5z" fill="#333" stroke="#fff"/><path d="M1 21v-7l6-8 4 6 3-4 7 8v5z" fill="#fff"/><path d="M11 14l3 6 0-4z" fill="#333"/></svg></span>
  <div class="tray">
    <svg width="183" height="40" viewBox="1025 728 183 40" fill="none" stroke="#fff" stroke-width="1.200"><circle cx="1043" cy="749" r="10.500" fill="#1893d8" stroke-width="1.600"/><text x="1038.800" y="755" class="ui" font-size="16" font-weight="700" fill="#fff" stroke="none">?</text><circle cx="1090" cy="743.500" r="2.600"/><circle cx="1084" cy="748" r="2.600"/><path d="M1080 755c0-5 8-5 8 0M1088 748c3-2 5 0 6 3M1117 751l5.500-5.500 5.500 5.500M1144 744.500h10v7h-12v-4M1140.500 742v3M1143.500 742v3M1139 745h6M1142 745v3M1164.500 743.500h13v8h-9M1164 742h5v4h-5zM1166 746v8M1171 754.500h7M1174.500 752v2M1187 746.500v4h2l3 3v-10l-3 3zM1195 745.500l5 5M1200 745.500l-5 5"/><path d="M1145.500 746.500h7v4h-7z" fill="#fff" stroke="none"/></svg>
    <span class="lang">ESP</span>
    <span class="clock"><span>10:33</span><span>27-12-2018</span></span>
    <svg width="53" height="40" viewBox="1313 728 53 40"><path d="M1325 740h16v12h-9l-4 4v-4h-3z" fill="#fff"/><path d="M1328 743.500h10M1328 746.500h10M1328 749h6" stroke="#333"/><circle cx="1340" cy="755" r="7.500" fill="#444" stroke="#aaa"/><text x="1337" y="759" class="ui" font-size="10.500" fill="#fff">7</text><path d="M1361.500 728v40" stroke="#777"/></svg>
  </div>
</footer>
</body>
</html>
```
FILE: styles.css
```css
* { box-sizing: border-box; }
body { margin: 0; width: 1366px; height: 768px; overflow: hidden; display: flex; flex-direction: column; background: #fefefe; font: 11.500px/1.300 "Open Sans", "Noto Sans", sans-serif; letter-spacing: -0.200px; color: #111; white-space: nowrap; }
svg { display: block; flex: none; overflow: visible; }
.ui { font-family: "Open Sans", "Noto Sans", sans-serif; letter-spacing: 0; }
.glyph { font-family: "Open Sans", "Noto Sans", sans-serif; letter-spacing: 0; fill: #444; }
.serif { font-family: "Liberation Serif", serif; }
.fxg { font-family: "Liberation Serif", serif; font-style: italic; font-weight: 700; letter-spacing: -0.500px; fill: #666; }
.caret { display: inline-block; flex: none; width: 5px; height: 3px; background: #666; clip-path: polygon(0 0, 100% 0, 50% 100%); }

.titlebar { height: 32px; flex: none; display: flex; align-items: center; justify-content: space-between; background: #e6e6e6; padding-left: 12px; font-size: 12px; letter-spacing: -0.180px; }
.photobar { height: 48px; flex: none; display: flex; align-items: center; background: #fff; letter-spacing: -0.080px; }
.all-photos { width: 150px; height: 48px; display: flex; align-items: center; gap: 8px; padding-left: 12px; background: #0078d7; color: #fff; }
.add-to { width: 420px; display: flex; align-items: center; gap: 6px; padding-left: 12px; }
.photo-actions { margin-left: 242px; display: flex; align-items: center; }
.act-edit { width: 78px; padding-left: 8px; }
.chev { margin: 0 24px 0 7px; }
.act-share { width: 88px; padding-left: 8px; }
.dots { margin-left: 30px; }

.stage { height: 648px; flex: none; position: relative; overflow: hidden; background: #fefefe; }
.photo { width: 1184px; height: 300px; margin-left: 91px; background: #e6e6e6; border-right: 1px solid #b5b5b5; }
.tabs { background: #217346; color: #fff; display: grid; align-items: center; text-align: center; }
.tabs .on { background: #f3f3f3; color: #217346; align-self: stretch; display: grid; place-items: center; }
.tabs > span:first-child { padding-right: 3px; }
.tabs .ask { text-align: left; }
.old-tabs { height: 31px; padding-top: 5px; font-size: 10.200px; letter-spacing: -0.200px; grid-template-columns: 53px 47px 58px 101px 67px 48px 58px 42px 56px 12px 1fr auto; }
.old-tabs > svg { margin-left: 12px; }
.old-tabs .ask { padding-left: 22px; }
.share { display: flex; gap: 6px; align-items: center; padding-right: 5px; }

.ribbon { display: flex; background: #f3f3f3; border-bottom: 1px solid #d2d2d2; color: #262626; }
.group { display: flex; flex-direction: column; flex: none; position: relative; }
.group::after { content: ""; position: absolute; right: 0; top: 4px; bottom: 4px; width: 1px; background: #b8b8b8; }
.gbody { display: flex; }
.gbody.col { flex-direction: column; gap: 3px; }
.line { display: flex; }
.gfoot { display: flex; align-items: center; }
.gfoot span { flex: 1; text-align: center; }
.big { display: flex; flex-direction: column; align-items: center; }
.big b { font-weight: 400; display: flex; align-items: center; gap: 3px; }
.select { background: #fff; border: 1px solid #c6c6c6; display: flex; align-items: center; justify-content: space-between; padding: 0 4px 0 2px; color: #444; }
.wraps > div { display: flex; align-items: center; }

.old-ribbon { height: 80px; font-size: 10.200px; letter-spacing: -0.100px; }
.old-ribbon .gbody { height: 66px; }
.old-ribbon .gfoot { height: 13px; line-height: 13px; font-size: 9.500px; letter-spacing: 0; }
.old-ribbon .big b { height: 13px; line-height: 13px; }
.old-ribbon .big > .caret { margin-top: 5px; }
.old-ribbon .g1 { width: 81px; }
.old-ribbon .g1 .big { width: 46px; padding-left: 5px; }
.old-ribbon .g2 { width: 185px; }
.old-ribbon .g2 .col { padding: 9px 0 0 7px; }
.old-ribbon .select { height: 20px; padding-top: 1px; }
.old-ribbon .s-font { width: 97px; }
.old-ribbon .s-size { width: 38px; margin-left: -1px; }
.old-ribbon .g3 { width: 250px; }
.old-ribbon .wraps { padding-top: 7px; }
.old-ribbon .wraps > div { height: 26px; }
.old-ribbon .wraps .caret { margin-left: 7px; }
.old-ribbon .g4 { width: 127px; }
.old-ribbon .g4 .col { padding: 9px 6px 0 7px; }
.old-ribbon .g5 { width: 189px; }
.old-ribbon .g5 .gbody { padding-left: 7px; }
.old-ribbon .g5 .w1 { width: 65px; }
.old-ribbon .g5 .w2 { width: 63px; }
.old-ribbon .g5 .w3 { width: 48px; }
.old-ribbon .g6 { width: 137px; }
.old-ribbon .g6 .gbody { padding-left: 5px; }
.old-ribbon .g6 .w1 { width: 41px; }
.old-ribbon .g6 .w2 { width: 39px; }
.old-ribbon .g6 .w3 { width: 45px; }
.old-ribbon .g7 { width: 156px; }
.old-ribbon .g7 .w1 { width: 49px; }
.old-ribbon .g7 .w2 { width: 62px; }
.collapse { margin: 70px 0 0 42px; }

.fbar { display: flex; align-items: flex-start; background: #e6e6e6; color: #444; }
.namebox, .fx, .finput { background: #fdfdfd; border: 1px solid #c6c6c6; display: flex; flex: none; }
.namebox { align-items: center; justify-content: space-between; padding: 0 5px; }
.namebox .caret { width: 7px; height: 4px; }
.old-fbar { height: 74px; padding: 9px 4px 0 5px; font-size: 10.500px; }
.old-fbar .namebox { width: 88px; height: 22px; padding-top: 2px; }
.old-fbar .fx { width: 95px; height: 22px; }
.old-fbar .finput { width: 962px; height: 57px; margin-left: 3px; justify-content: flex-end; padding: 7px 2px; }

.sheet { display: flex; }
table { table-layout: fixed; border-collapse: separate; border-spacing: 0; background: #fff; font-family: "Liberation Sans", sans-serif; }
td, th { padding: 0; border-right: 1px solid #d4d4d4; border-bottom: 1px solid #d4d4d4; overflow: hidden; text-align: left; vertical-align: middle; color: #111; }
th { font-weight: 400; text-align: center; background: #e6e6e6; border-color: #b8b8b8; color: #222; }
.head th { border-bottom-color: #999; border-right-color: #b8b8b8; }
.corner { background: linear-gradient(135deg, transparent 50%, #b0b0b0 50%) no-repeat 12px 4px / 8px 7px #e6e6e6; }
.bold td { font-weight: 700; color: #0a0a8c; }
.t { background: linear-gradient(135deg, #0a820a 3.500px, transparent 3.600px) no-repeat; }
.old-table { width: 1165px; height: 104px; font-size: 12px; line-height: 13px; letter-spacing: -0.300px; }
.old-table tr { height: 15px; }
.old-table tr:nth-child(1) { height: 16px; }
.old-table tr:nth-child(2), .old-table tr:nth-child(6) { height: 14px; }
.old-table td, .old-table th { padding-top: 1px; line-height: 12px; }
.old-table td { padding-left: 1px; }
.old-table .name { letter-spacing: -0.410px; padding-left: 2px; }
.old-table .bold td { letter-spacing: -0.100px; }
.old-table .n { text-align: right; padding-right: 3px; }
.old-table .m { padding-right: 6px; }
.old-table .z { padding-right: 19px; }
.old-table .u { padding-left: 15px; }
.old-table .p { padding-left: 5px; }
.old-table th.sel { background: #d2d2d2; color: #217346; border-bottom: 2px solid #217346; padding-top: 0; }
.old-table .cut { text-align: left; padding-left: 23px; }
.old-table .c0 { width: 23px; } .old-table .c1 { width: 331px; } .old-table .c2 { width: 57px; } .old-table .c3 { width: 89px; }
.old-table .c4, .old-table .c5 { width: 88px; } .old-table .c6 { width: 86px; } .old-table .c7 { width: 76px; } .old-table .c8 { width: 88px; }
.old-table .c9 { width: 37px; } .old-table .c10 { width: 88px; } .old-table .c11 { width: 86px; } .old-table .c12 { width: 28px; }
.vscroll { flex: 1; background: #e9e9e9; padding: 3px 3px 0; }
.vscroll span { display: grid; place-items: center; width: 12px; height: 12px; background: #fff; border: 1px solid #aaa; }
.vscroll i { width: 6px; height: 3px; background: #777; clip-path: polygon(50% 0, 100% 100%, 0 100%); }

.excel { position: absolute; left: 86px; top: 291px; width: 1280px; height: 357px; overflow: hidden; border-left: 1px solid #217346; background: #e6e6e6; box-shadow: 0 0 8px rgba(0,0,0,.55); }
.xtitle { height: 35px; display: flex; align-items: center; background: #217346; color: #fff; }
.autosave { width: 103px; padding-left: 23px; color: #4f9570; letter-spacing: 0.050px; }
.xname { margin-left: 300px; width: 531px; letter-spacing: -0.100px; }
.signin { width: 66px; height: 19px; margin-top: -2px; display: grid; place-items: center; background: #fff; color: #217346; letter-spacing: 0; }
.xtitle > svg:last-child { margin-left: 9px; }
.new-tabs { height: 30px; grid-template-columns: 61px 54px 67px 117px 77px 56px 65px 51px 62px 14px 1fr; }
.new-tabs > svg { margin-left: 15px; }
.new-tabs .ask { padding-left: 27px; }
.new-ribbon { height: 93px; letter-spacing: -0.100px; }
.new-ribbon .gbody { height: 75px; }
.new-ribbon .gfoot { height: 17px; font-size: 10.800px; line-height: 17px; letter-spacing: -0.100px; }
.new-ribbon .big b { height: 16px; line-height: 16px; margin-top: 1px; }
.new-ribbon .big b + b { height: 15px; margin-top: -1px; }
.new-ribbon .big > .caret { margin-top: 6px; }
.new-ribbon .g1 { width: 93px; }
.new-ribbon .g1 .big { width: 52px; padding-left: 6px; }
.new-ribbon .g2 { width: 214px; }
.new-ribbon .g2 .col { padding: 11px 0 0 8px; }
.new-ribbon .select { height: 23px; padding-top: 1px; }
.new-ribbon .s-font { width: 112px; }
.new-ribbon .s-size { width: 44px; margin-left: -1px; }
.new-ribbon .g3 { width: 288px; }
.new-ribbon .wraps { padding-top: 8px; }
.new-ribbon .wraps > div { height: 31px; }
.new-ribbon .wraps .caret { margin-left: 10px; }
.new-ribbon .g4 { width: 147px; }
.new-ribbon .g4 .col { padding: 11px 7px 0 8px; }
.new-ribbon .g5 { width: 218px; }
.new-ribbon .g5 .gbody { padding-left: 8px; }
.new-ribbon .g5 .w1, .new-ribbon .g5 .w2 { width: 74px; }
.new-ribbon .g5 .w3 { width: 54px; }
.new-ribbon .g6 { width: 158px; }
.new-ribbon .g6 .gbody { padding-left: 6px; }
.new-ribbon .g6 .w1 { width: 46px; }
.new-ribbon .g6 .w2 { width: 47px; }
.new-ribbon .g6 .w3 { width: 51px; }
.new-ribbon .g7 { width: 179px; }
.new-ribbon .g7 .w1 { width: 54px; }
.new-ribbon .g7 .w2 { width: 76px; }
.new-fbar { height: 86px; padding: 10px 0 0 5px; font-size: 12.500px; letter-spacing: 0; }
.new-fbar .namebox { width: 102px; height: 26px; padding: 1px 6px 0; }
.new-fbar .fx { width: 110px; height: 26px; }
.new-fbar .finput { width: 1100px; height: 66px; margin-left: 3px; padding: 5px 11px; }
.new-table { width: 1292px; flex: none; font-size: 11px; line-height: 12px; letter-spacing: -0.480px; }
.new-table tr { height: 14px; }
.new-table .head { height: 13px; }
.new-table .head th { letter-spacing: 0; }
.new-table td, .new-table tr + tr th { line-height: 11px; padding-bottom: 2px; }
.new-table td { padding-left: 2px; }
.new-table .name { letter-spacing: -0.750px; }
.new-table .bold td { color: #000080; letter-spacing: 0.350px; }
.new-table .t { padding-left: 3px; }
.new-table .u { padding-left: 11px; }
.new-table .bold .u { padding-left: 15px; }
.new-table .n { padding-left: 13px; }
.new-table .m { padding-left: 15px; }
.new-table .h { padding-left: 19px; }
.new-table .p { padding-left: 5px; }
.new-table .z { padding-left: 31px; }
.new-table .bold .n { padding-left: 18px; letter-spacing: 0.600px; }
.new-table .bold .w { padding-left: 21px; }
.new-table .bold .z { padding-left: 27px; }
.new-table th.sel { background: #d2d2d2; color: #217346; }
.new-table .active { overflow: visible; position: relative; }
.new-table .active::before { content: ""; position: absolute; inset: -2px; border: 2px solid #217346; }
.new-table .active::after { content: ""; position: absolute; right: -3px; bottom: -3px; width: 6px; height: 6px; background: #217346; border: 1px solid #fff; border-width: 1px 0 0 1px; }
.new-table .c0 { width: 23px; } .new-table .c1 { width: 251px; } .new-table .c2 { width: 45px; } .new-table .c3 { width: 67px; }
.new-table .c4 { width: 94px; } .new-table .c5 { width: 96px; } .new-table .c6 { width: 92px; } .new-table .c7 { width: 78px; }
.new-table .c8 { width: 96px; } .new-table .c9 { width: 40px; } .new-table .c10 { width: 96px; } .new-table .c11 { width: 89px; } .new-table .c12 { width: 45px; }

.taskbar { height: 40px; flex: none; display: flex; background: #333; color: #fff; }
.slot { width: 49px; height: 40px; display: grid; place-items: center; position: relative; }
.sm { width: 48px; }
.gap3 { width: 2px; }
.gap35 { width: 36px; }
.run::after { content: ""; position: absolute; bottom: 0; left: 5px; width: 40px; height: 2px; background: #76b9ed; }
.cur { background: #5c5c5c; }
.cur::after { left: 0; width: 49px; }
.tray { margin-left: auto; display: flex; align-items: center; letter-spacing: -0.300px; }
.lang { width: 36px; padding-left: 7px; }
.clock { width: 69px; display: grid; text-align: center; line-height: 18px; }
```
